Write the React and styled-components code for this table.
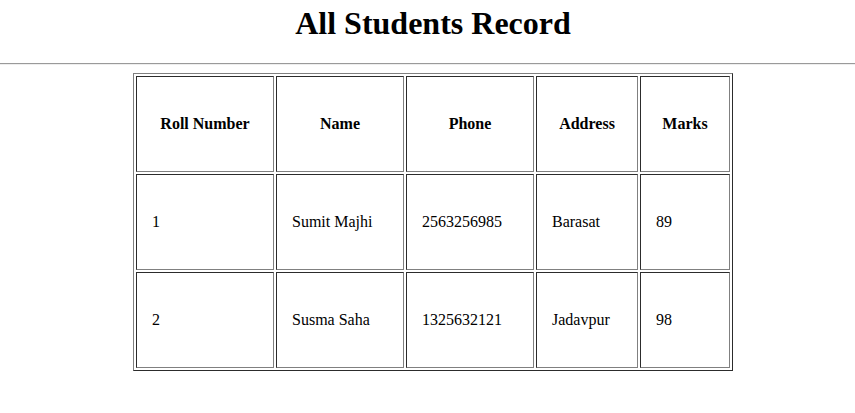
import React from 'react';
import styled, { createGlobalStyle } from 'styled-components';

const students = [
  { roll: '1', name: 'Sumit Majhi', phone: '2563256985', address: 'Barasat', marks: '89' },
  { roll: '2', name: 'Susma Saha', phone: '1325632121', address: 'Jadavpur', marks: '98' },
];

const columns = [
  { title: 'Roll Number', width: 138 },
  { title: 'Name', width: 128 },
  { title: 'Phone', width: 128 },
  { title: 'Address', width: 102 },
  { title: 'Marks', width: 90 },
];

function App() {
  return (
    <>
      <GlobalStyle />
      <Centered>
        <Title>All Students Record</Title>
      </Centered>
      <Rule />
      <Centered>
        <RecordTable>
          <colgroup>
            {columns.map(col => (
              <col key={col.title} style={{ width: col.width }} />
            ))}
          </colgroup>
          <thead>
            <tr>
              {columns.map(col => (
                <HeadCell key={col.title}>{col.title}</HeadCell>
              ))}
            </tr>
          </thead>
          <tbody>
            {students.map(s => (
              <tr key={s.roll}>
                <Cell>{s.roll}</Cell>
                <Cell>{s.name}</Cell>
                <Cell>{s.phone}</Cell>
                <Cell>{s.address}</Cell>
                <Cell>{s.marks}</Cell>
              </tr>
            ))}
          </tbody>
        </RecordTable>
      </Centered>
    </>
  );
}

const GlobalStyle = createGlobalStyle`
  body {
    margin: 0;
    background: #fff;
    color: #000;
    font-family: "Liberation Serif", "Times New Roman", serif;
    font-size: 16px;
  }
`;

const Centered = styled.div`
  padding-left: 11px;
  display: flex;
  flex-direction: column;
  align-items: center;
`;

const Title = styled.h1`
  font-size: 32px;
  font-weight: bold;
  margin: 5px 0 21px;
  line-height: 37px;
`;

const Rule = styled.hr`
  margin: 0 0 8px;
  border: none;
  border-top: 1px solid #9a9a9a;
  border-bottom: 1px solid #eeeeee;
  height: 0;
`;

const RecordTable = styled.table`
  width: 600px;
  table-layout: fixed;
  border: 1px outset grey;
  border-spacing: 2px;
  border-collapse: separate;
`;

const HeadCell = styled.th`
  border: 1px inset grey;
  padding: 15px;
  height: 64px;
  text-align: center;
  vertical-align: middle;
  font-weight: bold;
`;

const Cell = styled.td`
  border: 1px inset grey;
  padding: 15px;
  height: 64px;
  text-align: left;
  vertical-align: middle;
`;

export default App;
